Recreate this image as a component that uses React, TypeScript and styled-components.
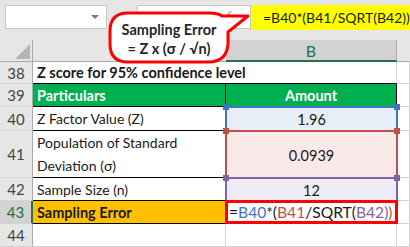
import React from "react";
import styled, { createGlobalStyle, css } from "styled-components";

const GlobalStyle = createGlobalStyle`
  html, body {
    margin: 0;
    padding: 0;
    background: #ffffff;
  }
  body {
    font-family: Lato, "Liberation Sans", sans-serif;
  }
`;

const Sheet = styled.div`
  position: relative;
  width: 410px;
  height: 247px;
  overflow: hidden;
  display: flex;
  flex-direction: column;
  background: #ffffff;
`;

/* ---------- formula bar ---------- */

const TopBar = styled.div`
  height: 40px;
  flex: none;
  display: flex;
  align-items: flex-start;
  padding: 5px 0 0 5px;
  box-sizing: border-box;
  background: #e6e6e6;
`;

const NameBox = styled.div`
  position: relative;
  width: 102px;
  height: 24px;
  box-sizing: border-box;
  background: #ffffff;
  border: 1px solid #c6c6c6;
`;

const DropArrow = styled.span`
  position: absolute;
  right: 7px;
  top: 9px;
  width: 0;
  height: 0;
  border-left: 4px solid transparent;
  border-right: 4px solid transparent;
  border-top: 4px solid #7b7b7b;
`;

const FxBox = styled.div`
  margin-left: 30px;
  width: 113px;
  height: 24px;
  box-sizing: border-box;
  background: #ffffff;
  border: 1px solid #c6c6c6;
  border-right: none;
  display: flex;
  align-items: center;
  justify-content: flex-end;
  padding-right: 16px;
`;

const Fx = styled.span`
  font-family: "Liberation Serif", serif;
  font-style: italic;
  font-size: 13px;
  color: #7f7f7f;
  sub {
    font-size: 9px;
  }
`;

const FormulaInput = styled.div`
  flex: 1;
  height: 25px;
  background: #ffff00;
  border-left: 1px solid #c6c6c6;
  display: flex;
  align-items: center;
  padding-left: 12px;
  font-size: 14px;
  white-space: nowrap;
  color: #1a1a1a;
`;

/* ---------- grid ---------- */

const Grid = styled.div`
  display: grid;
  grid-template-columns: 33px 193px 171px 13px;
  grid-template-rows: 22px 22px 23px 24px 47px 23px 23px 23px;
  color: #1a1a1a;
`;

const Corner = styled.div`
  position: relative;
  background: #e6e6e6;
  border-right: 1px solid #ababab;
  border-bottom: 1px solid #ababab;
  box-sizing: border-box;
  &::after {
    content: "";
    position: absolute;
    right: 2px;
    bottom: 2px;
    width: 0;
    height: 0;
    border-left: 15px solid transparent;
    border-bottom: 15px solid #b4b4b4;
  }
`;

const ColHead = styled.div<{ $selected?: boolean }>`
  box-sizing: border-box;
  display: flex;
  align-items: center;
  justify-content: center;
  font-size: 16px;
  ${({ $selected }) =>
    $selected
      ? css`
          background: #d2d2d2;
          color: #217346;
          border-right: 1px solid #ababab;
          border-bottom: 2px solid #217346;
        `
      : css`
          background: #e6e6e6;
          color: #444444;
          border-bottom: 1px solid #ababab;
        `}
`;

const RowHead = styled.div<{ $selected?: boolean }>`
  box-sizing: border-box;
  display: flex;
  align-items: center;
  justify-content: center;
  font-size: 15px;
  border-bottom: 1px solid #d4d4d4;
  ${({ $selected }) =>
    $selected
      ? css`
          background: #d2d2d2;
          color: #217346;
          border-right: 2px solid #217346;
        `
      : css`
          background: #e6e6e6;
          color: #444444;
          border-right: 1px solid #ababab;
        `}
`;

type CellProps = {
  $bg?: string;
  $bold?: boolean;
  $center?: boolean;
  $color?: string;
  $ruled?: boolean;
};

const Cell = styled.div<CellProps>`
  position: relative;
  box-sizing: border-box;
  display: flex;
  align-items: center;
  justify-content: ${({ $center }) => ($center ? "center" : "flex-start")};
  padding: 0 4px;
  line-height: 21px;
  white-space: nowrap;
  background: ${({ $bg }) => $bg || "#ffffff"};
  color: ${({ $color }) => $color || "#1a1a1a"};
  font-weight: ${({ $bold }) => ($bold ? 700 : 400)};
  font-size: ${({ $bold }) => ($bold ? "14.5px" : "14px")};
  border-right: 1px solid ${({ $ruled }) => ($ruled ? "#000000" : "#d4d4d4")};
  border-bottom: 1px solid ${({ $ruled }) => ($ruled ? "#000000" : "#d4d4d4")};
`;

/* title row: text spills over into column B */
const TitleCell = styled(Cell)`
  z-index: 1;
  background: transparent;
  border-right: none;
`;

const SpillCell = styled(Cell)`
  background: transparent;
  border-right-color: #d4d4d4;
`;

const Wrapped = styled.span`
  white-space: normal;
  line-height: 23px;
`;

/* coloured range boxes that Excel draws while editing a formula */
const RefCell = styled(Cell)<{ $ref: string; $tint: string }>`
  z-index: 1;
  margin: -1px -1px 0 -1px;
  font-size: 14.5px;
  background: ${({ $tint }) => $tint};
  border: none;
  border-left: 2px solid ${({ $ref }) => $ref};
  border-right: 2px solid ${({ $ref }) => $ref};
  border-top: 2px solid ${({ $ref }) => $ref};
  &::before,
  &::after {
    content: "";
    position: absolute;
    top: -4px;
    width: 6px;
    height: 6px;
    background: ${({ $ref }) => $ref};
  }
  &::before {
    left: -4px;
  }
  &::after {
    right: -4px;
  }
`;

const EditCell = styled(Cell)`
  z-index: 2;
  margin: -1px -1px 0 -1px;
  border: 3px solid #ff0000;
  padding: 0 0 0 1px;
  font-size: 15.6px;
  background: #ffffff;
`;

const Caret = styled.span`
  display: inline-block;
  width: 1px;
  height: 17px;
  margin-left: 3px;
  background: #000000;
`;

const Tok = styled.span<{ $c: string }>`
  color: ${({ $c }) => $c};
`;

/* ---------- callout ---------- */

const Callout = styled.div`
  position: absolute;
  left: 107px;
  top: 10px;
  width: 145px;
  height: 55px;
  z-index: 5;
`;

const CalloutText = styled.div`
  position: absolute;
  left: 3px;
  top: 10px;
  width: 118px;
  text-align: center;
  font-weight: 700;
  font-size: 14.5px;
  line-height: 19px;
  color: #262626;
`;

const BLUE = "#4472c4";
const RED = "#c0504d";
const PURPLE = "#8064a2";

export default function App() {
  return (
    <>
      <GlobalStyle />
      <Sheet>
        <TopBar>
          <NameBox>
            <DropArrow />
          </NameBox>
          <FxBox>
            <Fx>
              f<sub>x</sub>
            </Fx>
          </FxBox>
          <FormulaInput>=B40*(B41/SQRT(B42))</FormulaInput>
        </TopBar>

        <Grid>
          <Corner />
          <ColHead />
          <ColHead $selected>B</ColHead>
          <ColHead />

          <RowHead>38</RowHead>
          <TitleCell $bold $ruled>
            Z score for 95% confidence level
          </TitleCell>
          <SpillCell $ruled />
          <Cell />

          <RowHead>39</RowHead>
          <Cell $bg="#00b050" $color="#ffffff" $bold $ruled>
            Particulars
          </Cell>
          <Cell $bg="#00b050" $color="#ffffff" $bold $center $ruled>
            Amount
          </Cell>
          <Cell />

          <RowHead>40</RowHead>
          <Cell $ruled>Z Factor Value (Z)</Cell>
          <RefCell $center $ref={BLUE} $tint="#e8eef8">
            1.96
          </RefCell>
          <Cell />

          <RowHead>41</RowHead>
          <Cell $ruled>
            <Wrapped>
              Population of Standard
              <br />
              Deviation (σ)
            </Wrapped>
          </Cell>
          <RefCell $center $ref={RED} $tint="#f9e9e9">
            0.0939
          </RefCell>
          <Cell />

          <RowHead>42</RowHead>
          <Cell $ruled>Sample Size (n)</Cell>
          <RefCell $center $ref={PURPLE} $tint="#efebf5">
            12
          </RefCell>
          <Cell />

          <RowHead $selected>43</RowHead>
          <Cell $bg="#ffc000" $bold $ruled>
            Sampling Error
          </Cell>
          <EditCell>
            <Tok $c="#1a1a1a">=</Tok>
            <Tok $c={BLUE}>B40</Tok>
            <Tok $c="#1a1a1a">*(</Tok>
            <Tok $c={RED}>B41</Tok>
            <Tok $c="#1a1a1a">/SQRT(</Tok>
            <Tok $c={PURPLE}>B42</Tok>
            <Tok $c={PURPLE}>)</Tok>
            <Tok $c="#c55a11">)</Tok>
            <Caret />
          </EditCell>
          <Cell />

          <RowHead>44</RowHead>
          <Cell />
          <Cell />
          <Cell />
        </Grid>

        <Callout>
          <svg width="145" height="55" viewBox="0 0 145 55">
            <path
              d="M21 3 H102 Q111 3 115 6 L141 6 L121 22 V32 Q121 52 101 52 H21 Q3 52 3 34 V21 Q3 3 21 3 Z"
              fill="#ffffff"
              stroke="#ff0000"
              strokeWidth="3"
              strokeLinejoin="round"
            />
          </svg>
          <CalloutText>
            Sampling Error
            <br />= Z x (σ / √n)
          </CalloutText>
        </Callout>
      </Sheet>
    </>
  );
}
